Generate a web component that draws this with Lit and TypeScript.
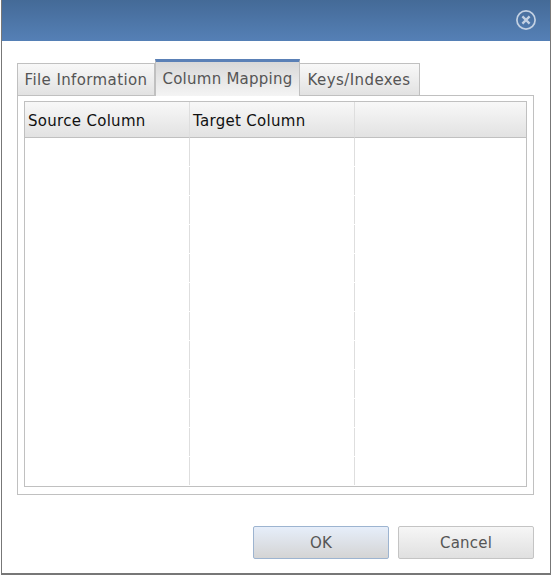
import { LitElement, html, css } from "lit";
import { customElement } from "lit/decorators.js";

@customElement("app-root")
export class AppRoot extends LitElement {
  static styles = css`
    :host { display: block; width: 552px; height: 575px; background: #fff; font-family: "DejaVu Sans", sans-serif; overflow: hidden; }
    .dialog { box-sizing: border-box; margin-left: 1px; width: 550px; height: 575px; border-left: 1px solid #777; border-right: 1px solid #777; border-bottom: 2px solid #777; display: flex; flex-direction: column; background: #fff; }
    .head { height: 41px; flex: none; background: linear-gradient(#446a97, #5580b6); display: flex; justify-content: flex-end; align-items: flex-start; padding: 10px 14px 0 0; box-sizing: border-box; }
    .head svg { display: block; }
    .body { padding: 18px 0 0 15px; flex: none; }
    .tabs { display: flex; align-items: flex-end; height: 37px; margin-bottom: -1px; position: relative; z-index: 1; }
    .tab { box-sizing: border-box; height: 33px; border: 1px solid #c0c0c0; border-left: none; font-size: 15px; letter-spacing: 0.38px; color: #555; background: linear-gradient(#f8f8f8, #e2e2e2); display: flex; align-items: center; justify-content: center; white-space: nowrap; }
    .tab.first { width: 138px; border-left: 1px solid #c0c0c0; }
    .tab.keys { width: 120px; letter-spacing: 0.42px; padding-right: 1px; }
    .tab.active { width: 145px; height: 37px; border: none; border-top: 3px solid #5a80b6; border-right: 1px solid #c0c0c0; border-left: 1px solid #c0c0c0; background: linear-gradient(#d8d8d8, #f4f4f4); padding-bottom: 1px; letter-spacing: 0.25px; }
    .panel { box-sizing: border-box; width: 517px; height: 400px; border: 1px solid #c0c0c0; padding: 5px 6px 6px 6px; background: #fff; }
    .grid { box-sizing: border-box; width: 503px; height: 386px; border: 1px solid #c0c0c0; display: grid; grid-template-columns: 165px 165px 1fr; grid-template-rows: 36px 1fr; }
    .hc { box-sizing: border-box; background: linear-gradient(#f8f8f8, #e2e2e2); border-bottom: 1px solid #c0c0c0; border-right: 1px solid #dedede; font-size: 15px; letter-spacing: 0.3px; color: #111; display: flex; align-items: center; padding: 2px 0 0 3px; white-space: nowrap; }
    .hc.last { border-right: none; }
    .col { position: relative; }
    .col.rule { background: repeating-linear-gradient(#dedede 0 28px, #fff 28px 29px) right top / 1px 100% no-repeat; }
    .foot { display: flex; justify-content: flex-end; gap: 9px; padding: 31px 16px 0 0; }
    .btn { box-sizing: border-box; width: 136px; height: 33px; border: 1px solid #c4c4c4; border-radius: 2px; background: linear-gradient(#f6f6f6, #e0e0e0); font-size: 15px; letter-spacing: 0.2px; color: #555; display: flex; align-items: center; justify-content: center; }
    .btn.ok { border-color: #9db4d0; background: linear-gradient(#e6eefa, #d4d4d4); }
  `;
  render() {
    return html`<div class="dialog">
      <div class="head">
        <svg width="20" height="20" viewBox="0 0 20 20" fill="none" stroke="#c3d1e3">
          <circle cx="10" cy="10" r="9.1" stroke-width="1.7"/>
          <path d="M6.4 6.4l7.2 7.2M13.6 6.4l-7.2 7.2" stroke-width="2.3"/>
        </svg>
      </div>
      <div class="body">
        <div class="tabs">
          <div class="tab first">File Information</div>
          <div class="tab active">Column Mapping</div>
          <div class="tab keys">Keys/Indexes</div>
        </div>
        <div class="panel">
          <div class="grid">
            <div class="hc">Source Column</div>
            <div class="hc">Target Column</div>
            <div class="hc last"></div>
            <div class="col rule"></div>
            <div class="col rule"></div>
            <div class="col"></div>
          </div>
        </div>
      </div>
      <div class="foot">
        <div class="btn ok">OK</div>
        <div class="btn">Cancel</div>
      </div>
    </div>`;
  }
}
